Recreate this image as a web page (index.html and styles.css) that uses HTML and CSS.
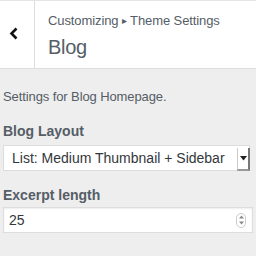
FILE: index.html
```html
<!DOCTYPE html>
<html>
<head>
<meta charset="utf-8">
<link rel="stylesheet" href="styles.css">
</head>
<body>
<div class="header">
  <div class="back">
    <svg width="34" height="67" viewBox="0 0 34 67"><polyline points="16.5,28.5 11.5,33.5 16.5,38.5" fill="none" stroke="#111" stroke-width="2.6"/></svg>
  </div>
  <div class="titles">
    <div class="crumb">Customizing <span class="tri">▸</span> Theme Settings</div>
    <div class="title">Blog</div>
  </div>
</div>
<div class="content">
  <p class="desc">Settings for Blog Homepage.</p>
  <div class="label">Blog Layout</div>
  <div class="select">
    <span class="sel-text">List: Medium Thumbnail + Sidebar</span>
    <span class="sel-btn"><svg width="7" height="5" viewBox="0 0 7 5"><polygon points="0,0 7,0 3.5,4.5" fill="#222"/></svg></span>
  </div>
  <div class="label label2">Excerpt length</div>
  <div class="input">
    <span class="in-text">25</span>
    <span class="spin"><svg width="7" height="12" viewBox="0 0 7 12"><polygon points="1,4.5 6,4.5 3.5,1.5" fill="#888"/><polygon points="1,7.5 6,7.5 3.5,10.5" fill="#888"/></svg></span>
  </div>
</div>
</body>
</html>
```
FILE: styles.css
```css
html, body {
  margin: 0;
  padding: 0;
  background: #eee;
  font-family: "Liberation Sans", Arial, sans-serif;
  color: #555d66;
}
.header {
  display: flex;
  background: #fff;
  height: 67px;
  border-top: 1px solid #e4e4e4;
  border-bottom: 1px solid #ddd;
  box-sizing: content-box;
}
.back {
  width: 34px;
  border-right: 1px solid #ddd;
  flex: none;
}
.back svg { display: block; margin-top: -1px; }
.titles {
  padding: 12px 0 0 13px;
}
.crumb {
  font-size: 13px;
  line-height: 16px;
  color: #555d66;
  letter-spacing: -0.1px;
}
.tri { font-size: 10px; position: relative; top: -1px; }
.title {
  font-size: 20px;
  line-height: 24px;
  margin-top: 5px;
  color: #555d66;
  letter-spacing: -0.3px;
}
.content {
  padding: 0 3px;
}
.desc {
  margin: 0;
  padding-top: 20px;
  font-size: 13px;
  line-height: 16px;
  color: #555d66;
  letter-spacing: -0.1px;
}
.label {
  margin-top: 17px;
  font-size: 14px;
  font-weight: bold;
  line-height: 18px;
  color: #555d66;
}
.label2 { margin-top: 15px; }
.select {
  margin-top: 5px;
  width: 245px;
  height: 24px;
  background: #fff;
  border: 1px solid #ddd;
  display: flex;
  align-items: center;
  position: relative;
}
.sel-text {
  padding-left: 8px;
  font-size: 14px;
  color: #32373c;
  flex: 1;
}
.sel-btn {
  width: 10px;
  height: 21px;
  border-left: 1px solid #ccc;
  border-right: 2px solid #777;
  border-bottom: 2px solid #999;
  display: flex;
  align-items: center;
  justify-content: center;
  margin-right: -1px;
  margin-top: 2px;
}
.sel-btn svg { display: block; }
.input {
  margin-top: 3px;
  width: 248px;
  height: 24px;
  background: #fff;
  border: 1px solid #ddd;
  box-shadow: inset 0 1px 2px rgba(0,0,0,0.07);
  display: flex;
  align-items: center;
}
.in-text {
  padding-left: 5px;
  font-size: 14px;
  color: #32373c;
  flex: 1;
}
.spin {
  width: 8px;
  height: 13px;
  border: 1px solid #ccc;
  border-radius: 5px;
  margin-right: 6px;
  display: flex;
  align-items: center;
  justify-content: center;
}
.spin svg { display: block; }
```
